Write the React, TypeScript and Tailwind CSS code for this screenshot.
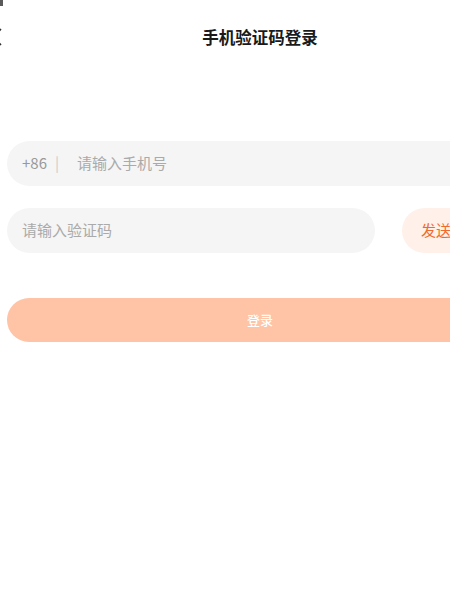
import React from "react";

export default function App() {
  const font = { fontFamily: '"Noto Sans CJK SC", "Noto Sans", sans-serif' };
  return (
    <div className="w-[450px] h-[614px] overflow-hidden bg-white relative" style={font}>
      <div className="absolute left-0 top-0 w-[3px] h-[6px] bg-[#5a5a5a]" />
      <div className="ml-[-10px] w-[540px] flex flex-col">
        <div className="h-[76px] relative flex items-center justify-center">
          <svg className="absolute left-[0px] top-[28px]" width="12" height="18" viewBox="0 0 12 18">
            <path d="M11 1 L3 9 L11 17" stroke="#333" strokeWidth="1.6" fill="none" />
          </svg>
          <span className="text-[16.5px] font-bold text-[#1a1a1a] leading-none mt-[-2px]">手机验证码登录</span>
        </div>
        <div className="px-[17px] pt-[65px] flex flex-col">
          <div className="h-[45px] rounded-full bg-[#f5f5f5] flex items-center pl-[15px] text-[15px]">
            <span className="text-[#999]">+86</span>
            <span className="text-[#ccc] ml-[8px]">|</span>
            <span className="text-[#aaa] ml-[18px]">请输入手机号</span>
          </div>
          <div className="mt-[22px] flex gap-[27px]">
            <div className="h-[45px] w-[368px] rounded-full bg-[#f5f5f5] flex items-center pl-[15px] text-[15px] text-[#aaa]">
              请输入验证码
            </div>
            <div className="h-[45px] flex-1 rounded-full bg-[#fff1ea] flex items-center pl-[19px] text-[15px] text-[#f26a2b]">
              发送验证码
            </div>
          </div>
          <div className="mt-[45px] h-[44px] rounded-full bg-[#ffc3a5] flex items-center justify-center text-[13px] text-white font-medium">
            登录
          </div>
        </div>
      </div>
    </div>
  );
}
